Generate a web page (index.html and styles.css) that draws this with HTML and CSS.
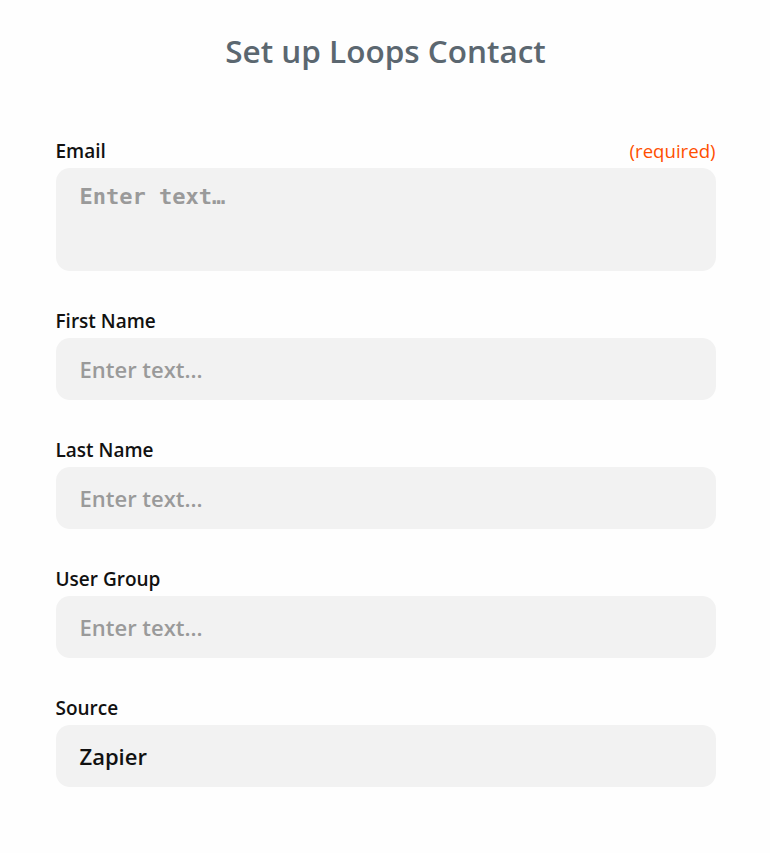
FILE: index.html
```html
<!DOCTYPE html>
<html>
<head>
<meta charset="utf-8">
<link rel="stylesheet" href="styles.css">
</head>
<body>
<main class="page">
  <h1 class="title">Set up Loops Contact</h1>
  <div class="fields">
    <div class="field">
      <div class="label-row">
        <span class="label">Email</span>
        <span class="required">(required)</span>
      </div>
      <div class="box box-tall"><span class="placeholder mono">Enter text…</span></div>
    </div>
    <div class="field">
      <div class="label-row"><span class="label">First Name</span></div>
      <div class="box"><span class="placeholder">Enter text...</span></div>
    </div>
    <div class="field">
      <div class="label-row"><span class="label">Last Name</span></div>
      <div class="box"><span class="placeholder">Enter text...</span></div>
    </div>
    <div class="field">
      <div class="label-row"><span class="label">User Group</span></div>
      <div class="box"><span class="placeholder">Enter text...</span></div>
    </div>
    <div class="field">
      <div class="label-row"><span class="label">Source</span></div>
      <div class="box"><span class="value">Zapier</span></div>
    </div>
  </div>
</main>
</body>
</html>
```
FILE: styles.css
```css
html, body {
  margin: 0;
  padding: 0;
  background: #fefefe;
}
body {
  font-family: "Open Sans", "Noto Sans", sans-serif;
}
.page {
  width: 660px;
  margin: 0 auto;
  padding-top: 29px;
  padding-left: 1px;
}
.title {
  margin: 0;
  font-size: 31.5px;
  line-height: 43px;
  font-weight: 600;
  color: #5b6770;
  text-align: center;
}
.fields {
  margin-top: 67px;
  display: flex;
  flex-direction: column;
  gap: 38px;
}
.field {
  display: flex;
  flex-direction: column;
  gap: 5px;
}
.label-row {
  display: flex;
  justify-content: space-between;
  align-items: baseline;
  line-height: 24px;
  height: 24px;
}
.label {
  font-size: 19px;
  font-weight: 600;
  color: #111;
}
.required {
  font-size: 18.6px;
  font-weight: 400;
  color: #ff4f00;
}
.box {
  background: #f2f2f2;
  border-radius: 14px;
  height: 62px;
  display: flex;
  align-items: center;
  padding: 0 24px;
  box-sizing: border-box;
}
.box-tall {
  height: 103px;
  align-items: flex-start;
  padding-top: 15px;
}
.placeholder {
  font-size: 22px;
  font-weight: 600;
  color: #9a9a9a;
}
.placeholder.mono {
  font-family: "DejaVu Sans Mono", "Liberation Mono", monospace;
  font-weight: 700;
  font-size: 22px;
  line-height: 28px;
}
.value {
  font-size: 22px;
  font-weight: 600;
  color: #111;
}
```
